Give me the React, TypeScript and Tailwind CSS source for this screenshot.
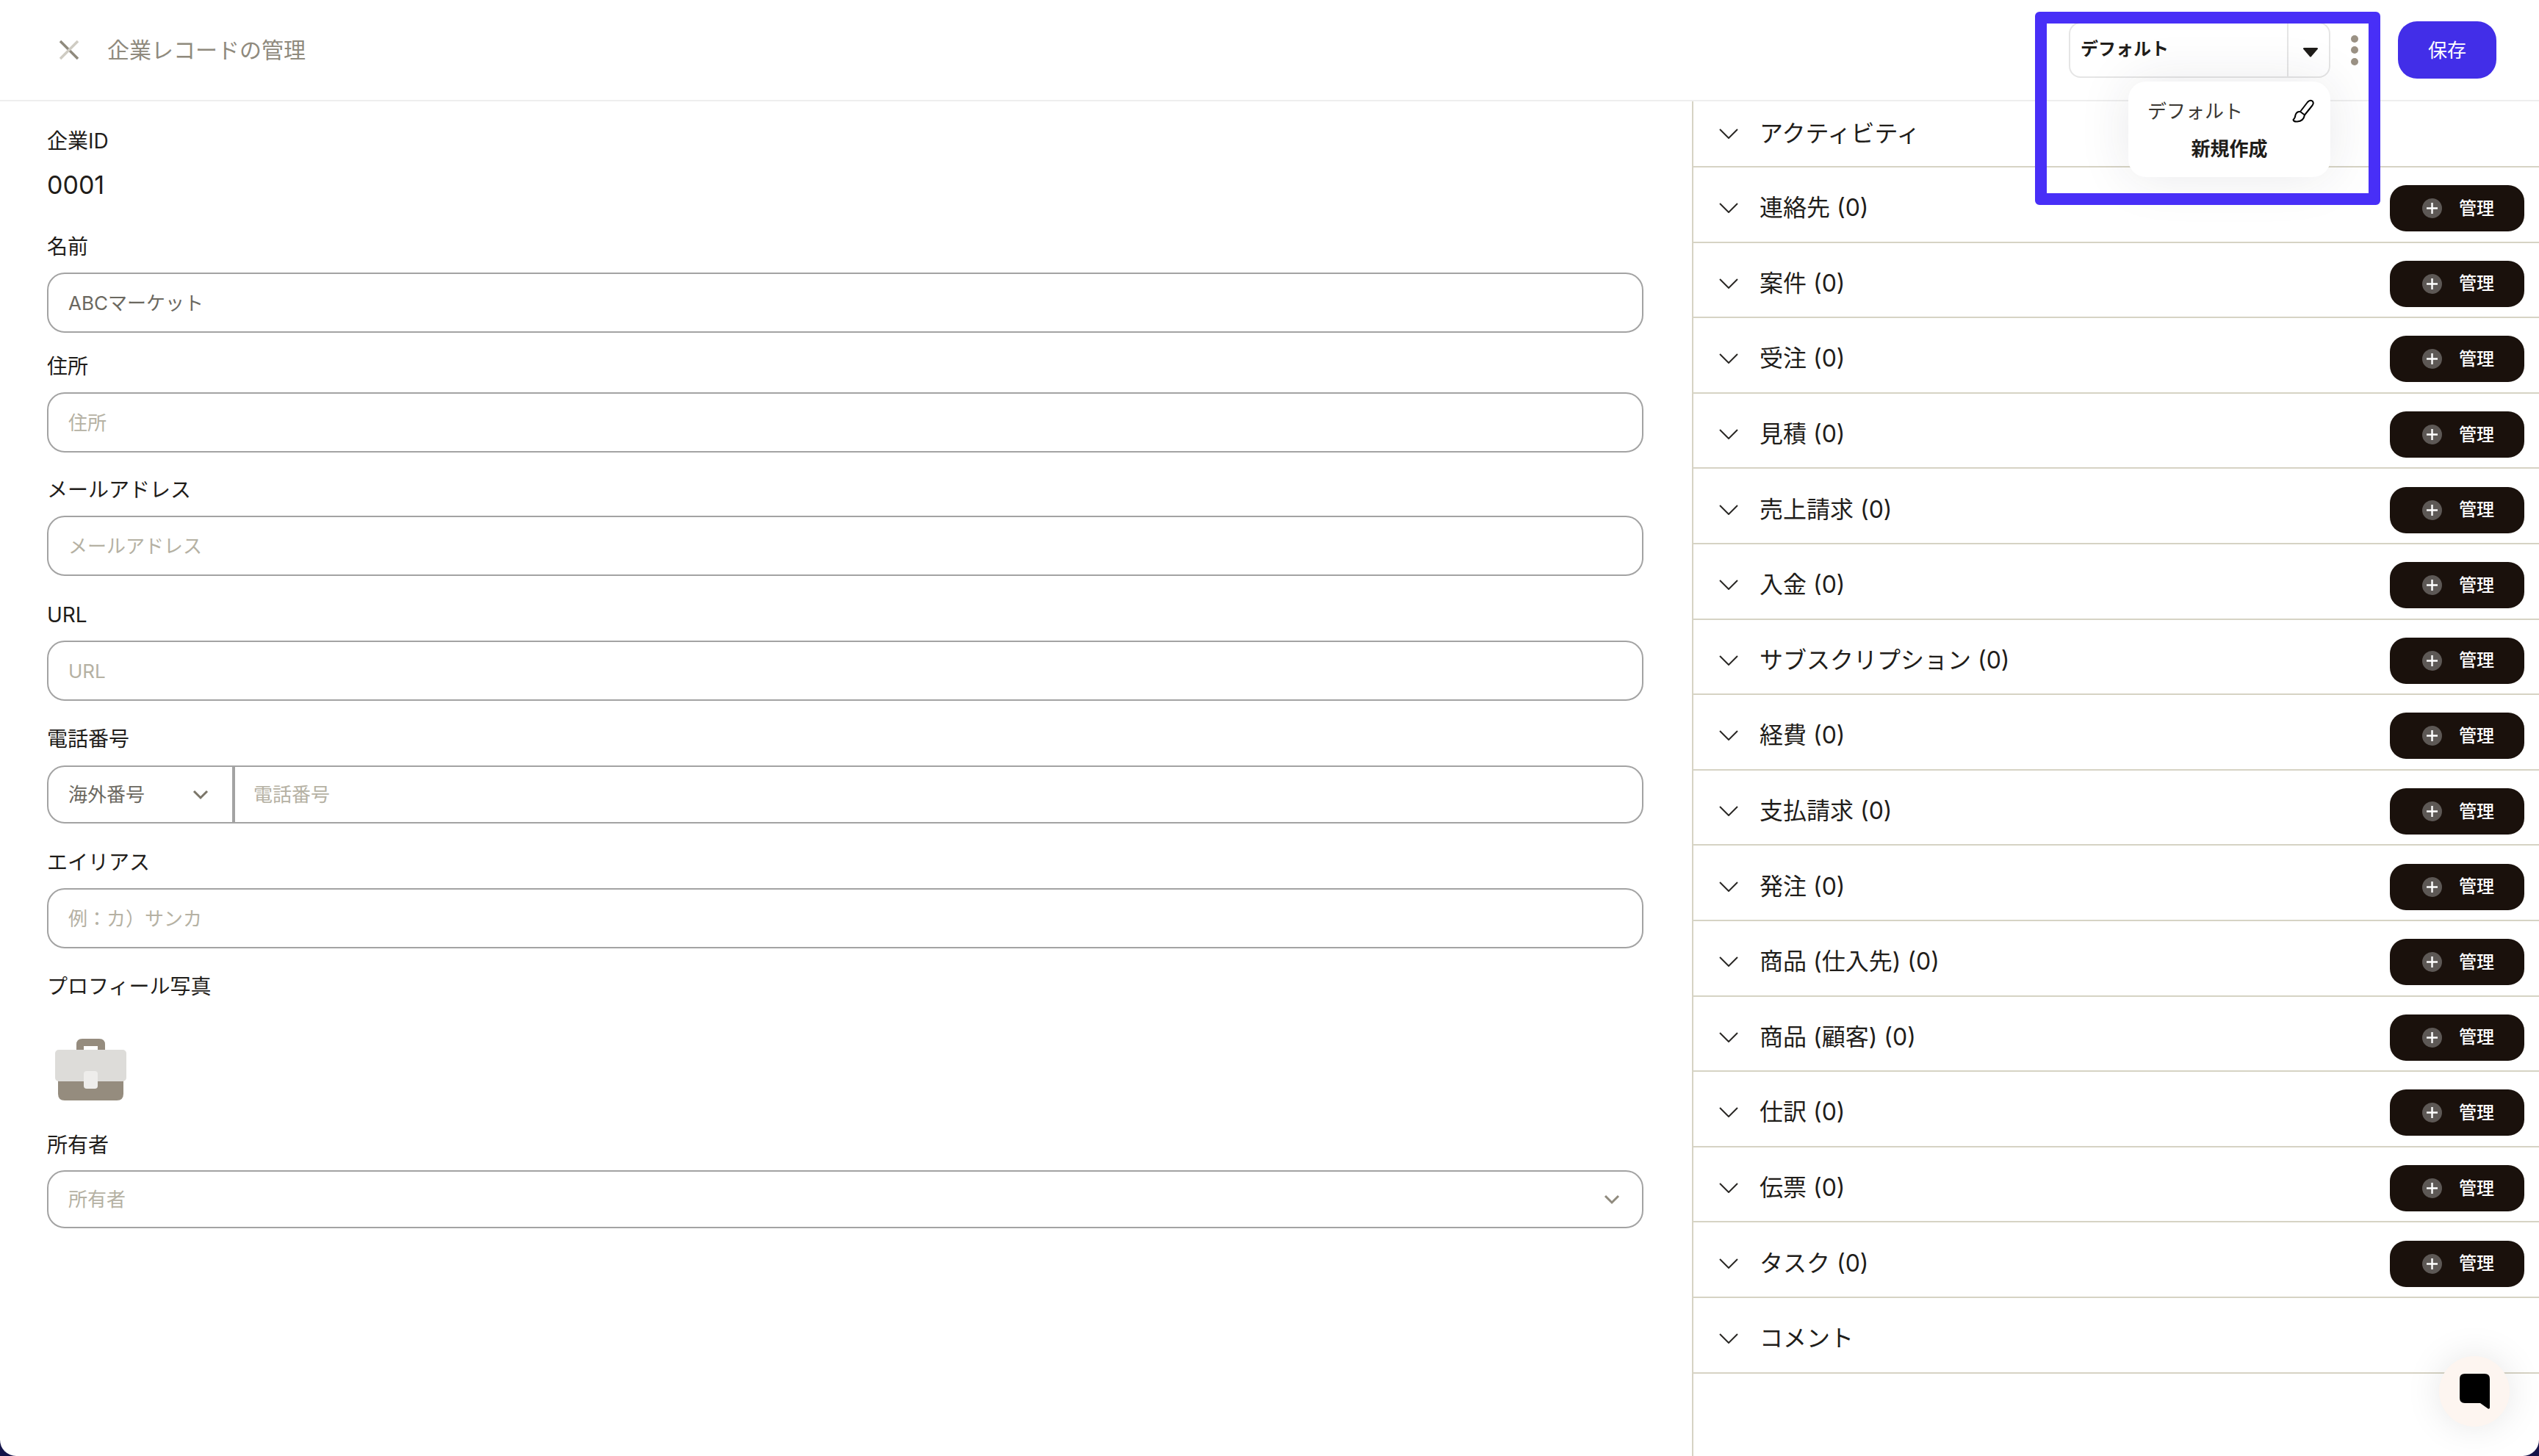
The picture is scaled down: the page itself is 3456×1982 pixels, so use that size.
import React from "react";

const Chevron = ({ className }: { className?: string }) => (
  <svg viewBox="0 0 26 14" fill="none" className={className}>
    <path d="M1 1 L13 13 L25 1" stroke="currentColor" strokeWidth="2" />
  </svg>
);

const FormChevron = ({ className }: { className?: string }) => (
  <svg viewBox="0 0 22 14" fill="none" className={className}>
    <path d="M2 2 L11 11 L20 2" stroke="currentColor" strokeWidth="3" />
  </svg>
);

const Label = ({ children, className }: { children: React.ReactNode; className: string }) => (
  <div className={`h-10 text-[28px] leading-10 text-[#1f1d1a] ${className}`}>{children}</div>
);

const Box = ({ text, filled, h, mt }: { text: string; filled?: boolean; h: string; mt: string }) => (
  <div
    className={`flex items-center rounded-[24px] border-2 border-[#a3a3a3] px-[27px] text-[26px] ${h} ${mt} ${
      filled ? "text-[#6b6860]" : "text-[#b5b1a3]"
    }`}
  >
    {text}
  </div>
);

const rows: [string, boolean][] = [
  ["アクティビティ", false],
  ["連絡先 (0)", true],
  ["案件 (0)", true],
  ["受注 (0)", true],
  ["見積 (0)", true],
  ["売上請求 (0)", true],
  ["入金 (0)", true],
  ["サブスクリプション (0)", true],
  ["経費 (0)", true],
  ["支払請求 (0)", true],
  ["発注 (0)", true],
  ["商品 (仕入先) (0)", true],
  ["商品 (顧客) (0)", true],
  ["仕訳 (0)", true],
  ["伝票 (0)", true],
  ["タスク (0)", true],
  ["コメント", false],
];

const ManageButton = () => (
  <button className="mt-[11px] flex h-[63px] w-[183px] items-center rounded-[22px] bg-[#1a110c] pl-[44px] text-[24px] font-medium text-white">
    <svg viewBox="0 0 27 27" className="mr-[23px] h-[27px] w-[27px]">
      <circle cx="13.5" cy="13.5" r="13.5" fill="#5d5855" />
      <path d="M13.5 6 V21 M6 13.5 H21" stroke="#fff" strokeWidth="2.4" />
    </svg>
    管理
  </button>
);

const Row = ({ name, action, first }: { name: string; action: boolean; first: boolean }) => (
  <div
    className={`flex items-center justify-between border-b-2 border-[#d6d3c4] pr-[20px] pl-[35px] ${
      first ? "h-[90px]" : "h-[102.6px]"
    }`}
  >
    <div className={`flex items-center ${first ? "" : "pt-[10px]"}`}>
      <Chevron className="mr-[29px] h-[14px] w-[26px] text-[#2a2825]" />
      <span className="text-[32px] leading-10 text-[#1f1d1a]">{name}</span>
    </div>
    {action && <ManageButton />}
  </div>
);

export default function App() {
  return (
    <div className="relative h-[1982px] w-[3456px] overflow-hidden bg-[#14144a] font-['Inter','Noto_Sans_CJK_JP',sans-serif]">
      <div className="flex h-full flex-col rounded-b-[22px] bg-white">
        <header className="flex h-[138px] shrink-0 items-center border-b-2 border-[#eeeeee] pr-[58px] pl-[80px]">
          <svg viewBox="0 0 28 28" className="mr-[38px] h-[28px] w-[28px]">
            <path d="M2 2 L26 26" stroke="#8f8a7d" strokeWidth="3.5" />
            <path d="M26 2 L2 26" stroke="#cfccc3" strokeWidth="3.5" />
          </svg>
          <h1 className="text-[30px] font-normal text-[#8f8a7d]">企業レコードの管理</h1>
          <div className="ml-auto flex h-[76px] w-[356px] rounded-[16px] border-2 border-[#e5e5e5]">
            <div className="flex flex-1 items-center border-r-2 border-[#e5e5e5] pb-[2px] pl-[14px] text-[24px] font-bold text-[#1f1d1a]">
              デフォルト
            </div>
            <div className="flex w-[55px] items-center justify-center pt-[6px] pl-[4px]">
              <svg viewBox="0 0 22 13" className="h-[13px] w-[22px]">
                <path d="M1 1.5 Q0.5 0 2.5 0 H19.5 Q21.5 0 21 1.5 L12 12 Q11 13 10 12 Z" fill="#1f1d1a" />
              </svg>
            </div>
          </div>
          <div className="mr-[54px] ml-[28px] flex flex-col gap-[5.5px]">
            <span className="h-[10px] w-[10px] rounded-full bg-[#9a9184]" />
            <span className="h-[10px] w-[10px] rounded-full bg-[#9a9184]" />
            <span className="h-[10px] w-[10px] rounded-full bg-[#9a9184]" />
          </div>
          <button className="h-[78px] w-[134px] rounded-[26px] bg-[#422ee8] text-[26px] text-white">保存</button>
        </header>

        <div className="flex min-h-0 flex-1">
          <main className="w-[2303px] shrink-0 pt-[34px] pr-[66px] pl-[64px]">
            <Label className="">企業ID</Label>
            <div className="mt-[20px] h-10 text-[34px] leading-10 text-[#1f1d1a]">0001</div>
            <Label className="mt-[44px]">名前</Label>
            <Box text="ABCマーケット" filled h="h-[82px]" mt="mt-[15px]" />
            <Label className="mt-[26px]">住所</Label>
            <Box text="住所" h="h-[82px]" mt="mt-[15px]" />
            <Label className="mt-[31px]">メールアドレス</Label>
            <Box text="メールアドレス" h="h-[82px]" mt="mt-[15px]" />
            <Label className="mt-[33px]">URL</Label>
            <Box text="URL" h="h-[82px]" mt="mt-[15px]" />
            <Label className="mt-[32px]">電話番号</Label>
            <div className="mt-[16px] flex h-[79px] rounded-[24px] border-2 border-[#a3a3a3] text-[26px]">
              <div className="flex w-[254px] items-center justify-between border-r-4 border-[#a3a3a3] pr-[32px] pl-[27px] text-[#6b6860]">
                海外番号
                <FormChevron className="h-[14px] w-[22px] text-[#7a7568]" />
              </div>
              <div className="flex flex-1 items-center pl-[25px] text-[#b5b1a3]">電話番号</div>
            </div>
            <Label className="mt-[33px]">エイリアス</Label>
            <Box text="例：カ）サンカ" h="h-[82px]" mt="mt-[15px]" />
            <Label className="mt-[32px]">プロフィール写真</Label>
            <svg viewBox="0 0 97 84" className="mt-[51px] ml-[11px] h-[84px] w-[97px]">
              <path d="M29 15 V8 Q29 0 37 0 H60 Q68 0 68 8 V15 H58 V10 H39 V15 Z" fill="#958c7e" />
              <path d="M4 50 H93 V75 Q93 84 84 84 H13 Q4 84 4 75 Z" fill="#958c7e" />
              <rect x="0" y="15" width="97" height="43" rx="5" fill="#dddcd9" />
              <rect x="39" y="44" width="19" height="24" rx="4" fill="#eeedeb" />
            </svg>
            <Label className="mt-[41px]">所有者</Label>
            <div className="mt-[14px] flex h-[79px] items-center justify-between rounded-[24px] border-2 border-[#a3a3a3] pr-[30px] pl-[27px] text-[26px] text-[#b5b1a3]">
              所有者
              <FormChevron className="h-[14px] w-[22px] text-[#8f8a7d]" />
            </div>
          </main>

          <aside className="flex-1 border-l-2 border-[#d6d3c4]">
            {rows.map(([name, action], i) => (
              <Row key={name} name={name} action={action} first={i === 0} />
            ))}
          </aside>
        </div>
      </div>

      <div className="absolute top-[111px] left-[2897px] h-[130px] w-[275px] rounded-[24px] bg-white pt-[20px] shadow-[0_0_70px_rgba(40,40,60,0.10)]">
        <div className="flex h-10 items-center justify-between pr-[22px] pl-[26px] text-[26px] text-[#3a3833]">
          デフォルト
          <svg viewBox="0 0 30 32" fill="none" className="h-[32px] w-[30px]">
            <path
              d="M11 17 L21 4 Q24 0.5 27.5 2.5 Q30 5 27.5 8.5 L17 21.5 Z M11 17 Q6 16.5 4.5 21.5 Q4 26 1.5 28 Q2 31 7 30.5 Q15.5 30 17 21.5"
              stroke="#000"
              strokeWidth="2"
              strokeLinejoin="round"
            />
          </svg>
        </div>
        <div className="mt-[12px] text-center text-[26px] font-bold text-[#1f1d1a]">新規作成</div>
      </div>

      <div className="pointer-events-none absolute top-[16px] left-[2770px] h-[263px] w-[470px] rounded-[6px] border-[16px] border-[#482ff7]" />

      <button className="absolute top-[1846px] left-[3320px] flex h-[96px] w-[96px] items-center justify-center rounded-full bg-[#fdf5f0] shadow-[0_0_50px_rgba(0,0,0,0.10)]">
        <svg viewBox="0 0 41 48" className="h-[48px] w-[41px]">
          <path d="M7 0 H34 Q41 0 41 7 V46 Q41 48.5 38.5 47.5 L28 40 H7 Q0 40 0 33 V7 Q0 0 7 0 Z" fill="#000" />
        </svg>
      </button>
    </div>
  );
}
